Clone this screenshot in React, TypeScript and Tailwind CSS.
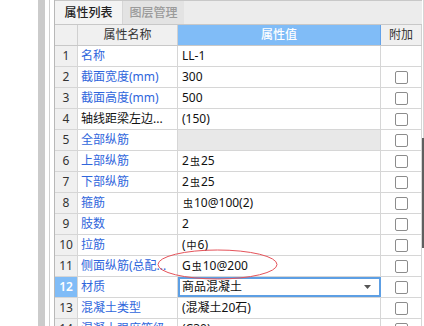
import React from 'react';

interface Row {
  n: number;
  name: string;
  value: string;
  dark?: boolean; // nombre en negro
  noCheck?: boolean;
  gray?: boolean;
  select?: boolean;
}

const rows: Row[] = [
  { n: 1, name: '名称', value: 'LL-1', noCheck: true },
  { n: 2, name: '截面宽度(mm)', value: '300' },
  { n: 3, name: '截面高度(mm)', value: '500' },
  { n: 4, name: '轴线距梁左边...', value: '(150)', dark: true },
  { n: 5, name: '全部纵筋', value: '', gray: true },
  { n: 6, name: '上部纵筋', value: '2虫25' },
  { n: 7, name: '下部纵筋', value: '2虫25' },
  { n: 8, name: '箍筋', value: '虫10@100(2)' },
  { n: 9, name: '肢数', value: '2' },
  { n: 10, name: '拉筋', value: '(中6)' },
  { n: 11, name: '侧面纵筋(总配...', value: 'G虫10@200' },
  { n: 12, name: '材质', value: '商品混凝土', select: true },
  { n: 13, name: '混凝土类型', value: '(混凝土20石)' },
  { n: 14, name: '混凝土强度等级', value: '(C30)' },
];

const font = { fontFamily: '"Noto Sans", "Noto Sans CJK SC", sans-serif' };

// Simbolos de acero (虫 / 中) un poco mas chicos y arriba
const renderValue = (v: string) =>
  v.split(/(虫|中)/).map((part, i) =>
    part === '虫' || part === '中' ? (
      <span key={i} className="text-[10px] align-[2px] mx-[1px]">
        {part}
      </span>
    ) : (
      <span key={i}>{part}</span>
    )
  );

const Checkbox = () => (
  <div className="w-[13px] h-[13px] rounded-[2px] border border-[#8c8c8c] bg-white" />
);

export default function App() {
  return (
    <div className="relative w-[424px] h-[326px] overflow-hidden bg-white flex text-[12px]" style={font}>
      <div className="w-[38px] shrink-0 bg-white" />
      <div className="w-[7px] shrink-0 bg-[#cbcbcb]" />
      <div className="w-[4px] shrink-0 bg-white" />
      <div className="w-px shrink-0 bg-[#cfcfcf]" />
      <div className="w-[4px] shrink-0 bg-white" />
      <div className="w-px shrink-0 bg-[#b8b8b8]" />

      {/* panel */}
      <div className="w-[367px] shrink-0 flex flex-col">
        {/* tabs */}
        <div className="flex h-[25px] shrink-0 border-t border-b border-[#c8c8c8] bg-[#ececec]">
          <div className="w-[67px] flex items-center justify-center bg-[#f3f3f3] text-[#222] font-medium">
            属性列表
          </div>
          <div className="w-[62px] flex items-center justify-center bg-[#e3e3e3] text-[#9a9a9a] border-l border-[#d6d6d6] font-medium">
            图层管理
          </div>
        </div>

        {/* header */}
        <div className="flex h-[21px] shrink-0 border-b border-[#c8c8c8] text-[#333]">
          <div className="w-[23px] bg-[#f0f0f0] border-r border-[#d0d0d0]" />
          <div className="w-[100px] bg-[#f0f0f0] border-r border-[#d0d0d0] flex items-center justify-center">
            属性名称
          </div>
          <div className="w-[203px] bg-[#80bcf7] border-r border-[#62a2ea] flex items-center justify-center text-white font-medium">
            属性值
          </div>
          <div className="w-[41px] bg-[#f0f0f0] border-r border-[#d0d0d0] flex items-center justify-center">
            附加
          </div>
        </div>

        {/* rows */}
        {rows.map((r) => (
          <div key={r.n} className="flex h-[21px] shrink-0 border-b border-[#d6d6d6]">
            <div
              className={`w-[23px] shrink-0 border-r border-[#d6d6d6] flex items-center justify-center ${
                r.select ? 'bg-[#80bcf7] text-white font-semibold' : 'bg-[#f0f0f0] text-[#333]'
              }`}
            >
              {r.n}
            </div>
            <div
              className={`w-[100px] shrink-0 border-r border-[#d6d6d6] flex items-center pl-[3px] whitespace-nowrap overflow-hidden ${
                r.dark ? 'text-[#111]' : 'text-[#2f66dc]'
              }`}
            >
              {r.name}
            </div>
            {r.select ? (
              <div className="w-[203px] shrink-0 border-2 border-[#5d9fe4] flex items-center pl-[2px] pr-[8px] text-[#111] bg-white">
                <span className="flex-1">{r.value}</span>
                <svg width="7" height="4" viewBox="0 0 7 4">
                  <path d="M0 0 L7 0 L3.5 4 Z" fill="#555" />
                </svg>
              </div>
            ) : (
              <div
                className={`w-[203px] shrink-0 border-r border-[#d6d6d6] flex items-center pl-[4px] whitespace-nowrap text-[#111] ${
                  r.gray ? 'bg-[#e8e8e8]' : 'bg-white'
                }`}
              >
                {renderValue(r.value)}
              </div>
            )}
            <div className="w-[41px] shrink-0 border-r border-[#d6d6d6] flex items-center justify-center">
              {!r.noCheck && <Checkbox />}
            </div>
          </div>
        ))}
      </div>

      {/* scrollbar */}
      <div className="w-[2px] shrink-0 flex flex-col bg-white">
        <div className="h-[138px] border-r border-[#d6d6d6]" />
        <div className="h-[110px] bg-[#5f5f5f]" />
      </div>

      {/* anotacion: elipse roja */}
      <svg className="absolute left-0 top-0 pointer-events-none" width="424" height="326" viewBox="0 0 424 326">
        <ellipse cx="217.5" cy="264.5" rx="59.5" ry="14.5" fill="none" stroke="#e5535a" strokeWidth="1" />
      </svg>
    </div>
  );
}
